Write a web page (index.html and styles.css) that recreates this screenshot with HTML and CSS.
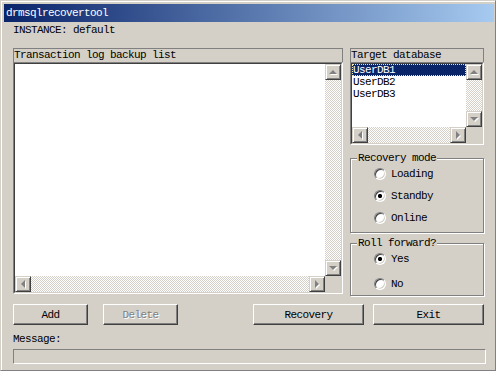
FILE: index.html
```html
<!DOCTYPE html>
<html lang="en">
<head>
    <meta charset="UTF-8">
    <title>drmsqlrecovertool</title>
    <link rel="stylesheet" href="styles.css">
</head>
<body>
    <div class="window">
        <div class="titlebar">drmsqlrecovertool</div>
        <div class="client">
            <div class="instance">INSTANCE: default</div>

            <div class="main">
                <div class="col-left">
                    <div class="caption">Transaction log backup list</div>
                    <div class="listbox list-log">
                        <div class="listbox-in">
                            <div class="items"></div>
                            <div class="vscroll">
                                <div class="sbtn"><span class="arr up"></span></div>
                                <div class="track"></div>
                                <div class="sbtn"><span class="arr down"></span></div>
                            </div>
                            <div class="hscroll">
                                <div class="sbtn"><span class="arr left"></span></div>
                                <div class="track"></div>
                                <div class="sbtn"><span class="arr right"></span></div>
                            </div>
                            <div class="corner"></div>
                        </div>
                    </div>
                </div>

                <div class="col-right">
                    <div class="caption">Target database</div>
                    <div class="listbox list-db">
                        <div class="listbox-in">
                            <div class="items">
                                <div class="item selected">UserDB1</div>
                                <div class="item">UserDB2</div>
                                <div class="item">UserDB3</div>
                            </div>
                            <div class="vscroll">
                                <div class="sbtn"><span class="arr up"></span></div>
                                <div class="track"></div>
                                <div class="sbtn"><span class="arr down"></span></div>
                            </div>
                            <div class="hscroll">
                                <div class="sbtn"><span class="arr left"></span></div>
                                <div class="track"></div>
                                <div class="sbtn"><span class="arr right"></span></div>
                            </div>
                            <div class="corner"></div>
                        </div>
                    </div>

                    <div class="group group-mode">
                        <div class="group-title">Recovery mode</div>
                        <div class="radios">
                            <div class="radio-row"><span class="radio"></span>Loading</div>
                            <div class="radio-row"><span class="radio checked"></span>Standby</div>
                            <div class="radio-row"><span class="radio"></span>Online</div>
                        </div>
                    </div>

                    <div class="group group-roll">
                        <div class="group-title">Roll forward?</div>
                        <div class="radios">
                            <div class="radio-row"><span class="radio checked"></span>Yes</div>
                            <div class="radio-row"><span class="radio"></span>No</div>
                        </div>
                    </div>
                </div>
            </div>

            <div class="buttons">
                <button class="btn btn-small">Add</button>
                <button class="btn btn-small btn-disabled">Delete</button>
                <button class="btn btn-wide btn-recovery">Recovery</button>
                <button class="btn btn-wide btn-exit">Exit</button>
            </div>

            <div class="message-label">Message:</div>
            <div class="message-box"></div>
        </div>
    </div>
</body>
</html>
```

FILE: styles.css
```css
body {
    margin: 0;
    background-color: #fff;
    font-family: "Liberation Mono", "DejaVu Sans Mono", monospace;
    font-size: 11px;
    letter-spacing: -0.6px;
    color: #000;
}


.window {
    width: 496px;
    height: 371px;
    box-sizing: border-box;
    padding: 3px 1px 0 3px;
    background-color: #d4d0c8;
    border: 1px solid;
    border-color: #d4d0c8 #808080 #808080 #d4d0c8;
    box-shadow: inset 1px 1px #fff;
}
.titlebar {
    height: 18px;
    line-height: 18px;
    padding-left: 2px;
    color: #fff;
    background: linear-gradient(to right, #0a246a, #a6caf0);
}
.client {
    padding-left: 9px;
}
.instance {
    margin-top: 2px;
    line-height: 13px;
}


.main {
    display: flex;
    gap: 7px;
    width: 471px;
    margin-top: 11px;
}
.col-left {
    width: 330px;
}
.col-right {
    width: 134px;
}
.caption {
    height: 14px;
    box-sizing: border-box;
    border: 1px solid #808080;
    border-bottom: 0;
    line-height: 13px;
}


.listbox {
    box-sizing: border-box;
    border: 1px solid;
    border-color: #808080 #fff #fff #808080;
}
.listbox-in {
    height: 100%;
    box-sizing: border-box;
    border: 1px solid;
    border-color: #404040 #d4d0c8 #d4d0c8 #404040;
    display: grid;
    grid-template-columns: 1fr 16px;
    grid-template-rows: 1fr 16px;
    background-color: #fff;
}
.list-log {
    height: 232px;
}
.list-db {
    height: 83px;
}
.items {
    overflow: hidden;
}
.item {
    height: 12px;
    line-height: 12px;
    padding-left: 1px;
}
.item.selected {
    background-color: #0a246a;
    color: #fff;
    outline: 1px dotted #f4e8a8;
    outline-offset: -1px;
}
.vscroll {
    display: flex;
    flex-direction: column;
}
.hscroll {
    display: flex;
}
.track {
    flex: 1;
    background: repeating-conic-gradient(#d4d0c8 0 25%, #fff 0 50%) 0 0 / 2px 2px;
}
.corner {
    background-color: #d4d0c8;
}
.sbtn {
    width: 16px;
    height: 16px;
    flex-shrink: 0;
    box-sizing: border-box;
    display: flex;
    justify-content: center;
    align-items: center;
    background-color: #d4d0c8;
    border: 1px solid;
    border-color: #d4d0c8 #404040 #404040 #d4d0c8;
    box-shadow: inset 1px 1px #fff, inset -1px -1px #808080;
}
.arr {
    width: 0;
    height: 0;
    filter: drop-shadow(1px 1px 0 #fff);
}
.arr.up {
    border-left: 4px solid transparent;
    border-right: 4px solid transparent;
    border-bottom: 4px solid #808080;
}
.arr.down {
    border-left: 4px solid transparent;
    border-right: 4px solid transparent;
    border-top: 4px solid #808080;
}
.arr.left {
    border-top: 4px solid transparent;
    border-bottom: 4px solid transparent;
    border-right: 4px solid #808080;
}
.arr.right {
    border-top: 4px solid transparent;
    border-bottom: 4px solid transparent;
    border-left: 4px solid #808080;
}


.group {
    border: 1px solid #808080;
    box-shadow: inset 1px 1px #fff, 1px 1px #fff;
    padding-left: 23px;
}
.group-mode {
    margin-top: 13px;
    padding-bottom: 8px;
}
.group-roll {
    margin-top: 10px;
    padding-bottom: 5px;
}
.group-title {
    width: fit-content;
    margin: -7px 0 0 -17px;
    padding: 0 1px;
    line-height: 13px;
    background-color: #d4d0c8;
}
.radios {
    display: flex;
    flex-direction: column;
    gap: 10px;
    margin-top: 3px;
}
.group-roll .radios {
    gap: 13px;
}
.radio-row {
    display: flex;
    align-items: center;
    gap: 5px;
    height: 12px;
    line-height: 12px;
}
.radio {
    width: 12px;
    height: 12px;
    box-sizing: border-box;
    border-radius: 50%;
    background-color: #fff;
    border: 1px solid;
    border-color: #808080 #fff #fff #808080;
    box-shadow: inset 1px 1px #404040, inset -1px -1px #d4d0c8;
}
.radio.checked {
    background: radial-gradient(circle, #000 1.8px, #fff 2.4px);
}


.buttons {
    display: flex;
    width: 471px;
    margin-top: 8px;
}
.btn {
    height: 21px;
    box-sizing: border-box;
    padding: 0;
    font: inherit;
    letter-spacing: inherit;
    color: #000;
    background-color: #d4d0c8;
    border: 1px solid;
    border-color: #fff #404040 #404040 #fff;
    box-shadow: inset -1px -1px #808080;
}
.btn-small {
    width: 75px;
    margin-right: 15px;
}
.btn-wide {
    width: 111px;
}
.btn-recovery {
    margin-left: auto;
}
.btn-exit {
    margin-left: 9px;
}
.btn-disabled {
    color: #808080;
    text-shadow: 1px 1px #fff;
}


.message-label {
    margin-top: 8px;
    line-height: 13px;
}
.message-box {
    width: 473px;
    height: 15px;
    box-sizing: border-box;
    margin-top: 3px;
    border: 1px solid;
    border-color: #808080 #fff #fff #808080;
}
```
